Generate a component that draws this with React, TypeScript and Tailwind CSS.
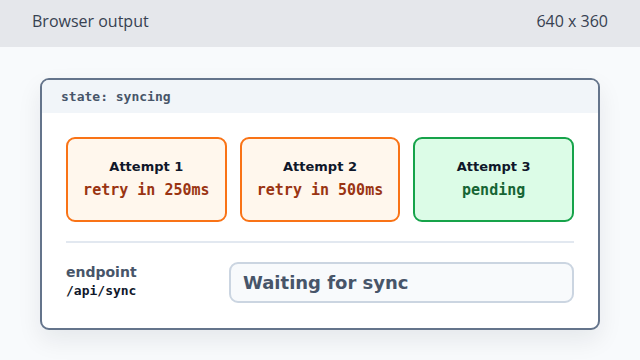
const attempts = [
  { label: 'Attempt 1', status: 'retry in 250ms', tone: 'orange' },
  { label: 'Attempt 2', status: 'retry in 500ms', tone: 'orange' },
  { label: 'Attempt 3', status: 'pending', tone: 'green' },
];

const mono = "font-['DejaVu_Sans_Mono',monospace]";

export default function App() {
  return (
    <div className="w-[640px] h-[360px] bg-[#f8fafc] font-['DejaVu_Sans',sans-serif] overflow-hidden">
      {/* top bar */}
      <div className="h-[47px] bg-[#e5e7eb] flex justify-between px-8 pt-[10px] text-[16px] leading-[22px] text-[#374151] font-['Open_Sans',sans-serif]">
        <span>Browser output</span>
        <span>640 x 360</span>
      </div>

      <div className="px-10 pt-[31px]">
        <div className="rounded-[9px] border-2 border-[#64748b] bg-white overflow-hidden shadow-[0_10px_24px_rgba(15,23,42,0.08)]">
          <div className={`h-[33px] bg-[#f1f5f9] flex items-center px-[19px] text-[13px] font-bold text-[#475569] ${mono}`}>
            state: syncing
          </div>
          <div className="px-6 pt-6 pb-[25px]">
            <div className="grid grid-cols-3 gap-[13px]">
              {attempts.map((a) => (
                <div
                  key={a.label}
                  className={
                    a.tone === 'green'
                      ? 'h-[85px] rounded-[9px] border-2 border-[#16a34a] bg-[#dcfce7] flex flex-col items-center justify-center gap-[5px]'
                      : 'h-[85px] rounded-[9px] border-2 border-[#f97316] bg-[#fff7ed] flex flex-col items-center justify-center gap-[5px]'
                  }
                >
                  <div className="text-[13px] font-bold text-[#0f172a] leading-4">{a.label}</div>
                  <div
                    className={`text-[15px] font-bold leading-5 ${mono} ${
                      a.tone === 'green' ? 'text-[#166534]' : 'text-[#9a3412]'
                    }`}
                  >
                    {a.status}
                  </div>
                </div>
              ))}
            </div>
            <div className="h-[2px] bg-[#e2e8f0] mt-[19px] mb-[19px]" />
            <div className="flex items-center">
              <div className="w-[163px] -mt-[3px]">
                <div className="text-[14px] font-bold text-[#475569] leading-[20px]">endpoint</div>
                <div className={`text-[13px] font-bold text-[#0f172a] leading-[18px] ${mono}`}>/api/sync</div>
              </div>
              <div className="flex-1 h-[41px] rounded-[9px] border-2 border-[#cbd5e1] bg-[#f8fafc] flex items-center px-3 text-[18px] font-bold text-[#475569]">
                Waiting for sync
              </div>
            </div>
          </div>
        </div>
      </div>
    </div>
  );
}
